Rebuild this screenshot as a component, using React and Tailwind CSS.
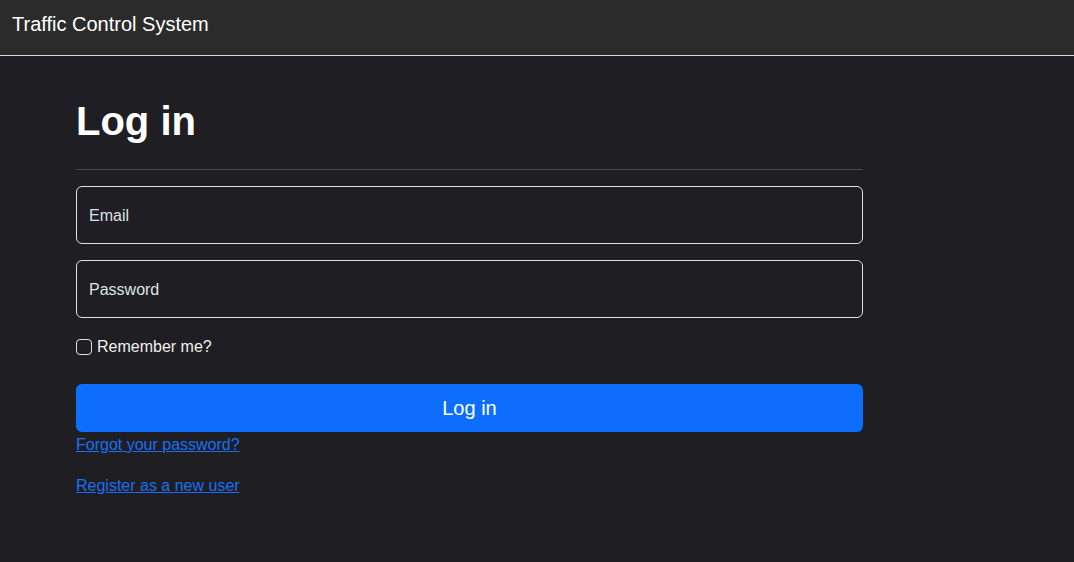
export default function App() {
  return (
    <div className="min-h-[562px] bg-[#1f1f23] text-[#dee2e6] font-['Liberation_Sans',Arial,sans-serif]">
      <header className="h-[56px] bg-[#2b2b2b] border-b border-[#d9d9d9] pl-3 pt-[9px]">
        <span className="text-[20px] leading-[30px] text-white">Traffic Control System</span>
      </header>

      <main className="pl-[76px] w-[863px] pt-[40px]">
        <h1 className="text-[40px] leading-[50px] font-bold text-white mb-[23px]">Log in</h1>
        <hr className="border-0 border-t border-[#4a4a50] mb-4" />

        <div className="h-[58px] rounded-[6px] border border-[#dee2e6] flex items-center px-3 pt-[2px] text-[16px] text-[#dee2e6] mb-4">
          Email
        </div>
        <div className="h-[58px] rounded-[6px] border border-[#dee2e6] flex items-center px-3 pt-[2px] text-[16px] text-[#dee2e6] mb-4">
          Password
        </div>

        <label className="flex items-center h-6 pt-[2px] text-[16px] gap-[5px] text-[#f0f0f0]">
          <span className="w-4 h-4 rounded-[4px] border border-[#dee2e6] shrink-0" />
          Remember me?
        </label>

        <button className="mt-[26px] w-full h-12 rounded-[6px] bg-[#0d6efd] text-white text-[20px]">
          Log in
        </button>

        <p className="leading-[26px] text-[16px]">
          <a href="#" className="text-[#1a6ef5] underline">Forgot your password?</a>
        </p>
        <p className="leading-6 text-[16px] mt-[16px]">
          <a href="#" className="text-[#1a6ef5] underline">Register as a new user</a>
        </p>
      </main>
    </div>
  )
}
